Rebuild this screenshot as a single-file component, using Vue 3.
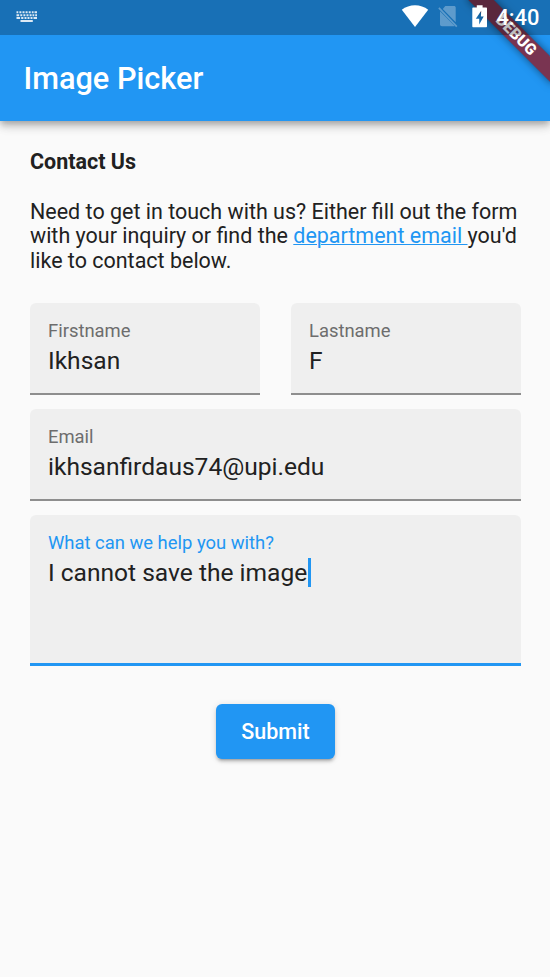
<script setup>
import { ref } from 'vue'

const names = ref([
  { label: 'Firstname', value: 'Ikhsan' },
  { label: 'Lastname', value: 'F' },
])
const email = ref('ikhsanfirdaus74@upi.edu')
const message = ref('I cannot save the image')
</script>

<template>
  <div class="screen">
    <header class="app-bar">
      <h1 class="title">Image Picker</h1>
    </header>

    <main class="content">
      <h2 class="heading">Contact Us</h2>
      <p class="intro">
        <span class="line">Need to get in touch with us? Either fill out the form</span>
        <span class="line">with your inquiry or find the <a class="link">department email </a>you'd</span>
        <span class="line">like to contact below.</span>
      </p>

      <form class="form" @submit.prevent>
        <div class="names">
          <div v-for="f in names" :key="f.label" class="field">
            <span class="label">{{ f.label }}</span>
            <span class="value">{{ f.value }}</span>
          </div>
        </div>
        <div class="field">
          <span class="label">Email</span>
          <span class="value">{{ email }}</span>
        </div>
        <div class="field area focused">
          <span class="label">What can we help you with?</span>
          <span class="value">{{ message }}<i class="caret"></i></span>
        </div>
        <button class="submit">Submit</button>
      </form>
    </main>

    <div class="banner-clip">
      <div class="banner">DEBUG</div>
    </div>

    <div class="status-bar">
      <svg class="keyboard" width="22" height="12" viewBox="0 0 22 12" fill="#fff">
        <path d="M.5.3h1.800v2H.5zM3.400.3h2v2h-2zM6.500.3h2v2h-2zM9.600.3h2v2h-2zM12.700.3h2v2h-2zM15.800.3h1.800v2h-1.800zM18.500.3h2.500v2h-2.500zM.5 3.200h2.700v2H.5zM4.300 3.200h2v2h-2zM7.400 3.200h2v2h-2zM10.500 3.200h2v2h-2zM13.600 3.200h2v2h-2zM16.500 3.200h1.800v2h-1.800zM19.200 3.200h1.800v2h-1.800zM.5 6.100h3.600v2H.5zM5.200 6.100h2.200v2H5.200zM8.500 6.100h2v2h-2zM11.500 6.100h2v2h-2zM14.500 6.100h2v2h-2zM17.500 6.100h3.500v2h-3.500zM4.500 9h12.300v2H4.500z" />
      </svg>
      <div class="indicators">
        <svg class="wifi" width="28" height="24" viewBox="0 0 28 24" fill="#fff">
          <path d="M.8 5.800C4.500 2.800 9.200 1.300 14 1.300s9.500 1.500 13.200 4.500L14 23z" />
        </svg>
        <svg class="sim" width="20" height="23" viewBox="0 0 20 23" fill="#fff" opacity=".3">
          <path d="M7.300 1h8.700c1 0 1.700.7 1.700 1.700v14.500L4.800 4z" />
          <path d="M2 6.200 16.700 21c-.3.200-.6.300-1 .3H4c-1.200 0-2-.8-2-2z" />
          <path d="M.9 2.900 18.800 21.600" stroke="#fff" stroke-width="1.700" />
        </svg>
        <svg class="battery" width="16" height="23" viewBox="0 0 16 23" fill="#fff">
          <path fill-rule="evenodd" d="M4.800.2h5.800v2.300H14c.6 0 1 .4 1 1v17.800c0 .6-.4 1-1 1H1.300c-.6 0-1-.4-1-1V3.500c0-.6.4-1 1-1h3.500zM9.200 5.700 3.800 13.800h3.400v5.800L11.700 11.600H8.900z" />
        </svg>
        <span class="time">4:40</span>
      </div>
    </div>
  </div>
</template>

<style>
body {
  margin: 0;
  background: #fafafa;
}
</style>

<style scoped>
.screen {
  position: relative;
  width: 550px;
  height: 977px;
  overflow: hidden;
  background: #fafafa;
  color: #212121;
  font-family: Roboto, "Liberation Sans", sans-serif;
}
.app-bar {
  position: relative;
  box-sizing: border-box;
  height: 121px;
  padding: 37px 23.500px 0;
  display: flex;
  align-items: center;
  background: #2196f3;
  box-shadow: 0 3px 6px -1px rgba(0, 0, 0, .2), 0 6px 8px rgba(0, 0, 0, .14), 0 1px 15px rgba(0, 0, 0, .12);
}
.title {
  margin: 0;
  color: #fff;
  font-size: 30.700px;
  line-height: 36px;
  font-weight: 500;
  white-space: nowrap;
}
.content {
  padding: 28px 29px 0 30px;
}
.heading {
  margin: 0;
  font-size: 21.500px;
  line-height: 25px;
  font-weight: 700;
}
.intro {
  margin: 25.500px 0 0;
  font-size: 21.490px;
  line-height: 24.500px;
}
.line {
  display: block;
  width: max-content;
  white-space: pre;
}
.link {
  color: #2196f3;
  text-decoration: underline;
  text-decoration-thickness: 1px;
}
.form {
  display: flex;
  flex-direction: column;
  gap: 14px;
  margin-top: 30px;
}
.names {
  display: grid;
  grid-template-columns: 1fr 1fr;
  gap: 31px;
}
.field {
  box-sizing: border-box;
  height: 92px;
  padding: 17px 18px 0;
  display: flex;
  flex-direction: column;
  background: #efefef;
  border-bottom: 2px solid #8e8e8e;
  border-radius: 6px 6px 0 0;
}
.area {
  height: 151px;
}
.focused {
  border-bottom: 3px solid #2196f3;
}
.label {
  font-size: 18.420px;
  line-height: 22px;
  color: #6d6d6d;
  width: max-content;
}
.focused .label {
  color: #2196f3;
}
.value {
  margin-top: 4px;
  font-size: 24.560px;
  line-height: 30px;
  width: max-content;
  white-space: pre;
}
.caret {
  display: inline-block;
  width: 3px;
  height: 29px;
  margin-left: .5px;
  vertical-align: top;
  background: #2196f3;
}
.submit {
  align-self: center;
  margin-top: 24px;
  width: 119px;
  height: 55px;
  padding: 0;
  border: 0;
  border-radius: 6px;
  background: #2196f3;
  color: #fff;
  font: 500 21.500px/25px Roboto, sans-serif;
  box-shadow: 0 4px 2px -3px rgba(0, 0, 0, .2), 0 3px 3px rgba(0, 0, 0, .14), 0 1px 7px rgba(0, 0, 0, .12);
}
.banner-clip {
  position: absolute;
  top: 0;
  right: 0;
  width: 120px;
  height: 121px;
  overflow: hidden;
}
.banner {
  position: absolute;
  top: 26px;
  left: 24.500px;
  width: 122px;
  height: 18.300px;
  transform: rotate(45deg);
  background: rgba(160, 10, 12, .7);
  box-shadow: 0 0 9px rgba(0, 0, 0, .5);
  color: #fff;
  text-align: center;
  font-size: 15.600px;
  line-height: 18.600px;
  font-weight: 900;
}
.status-bar {
  position: absolute;
  top: 0;
  left: 0;
  box-sizing: border-box;
  width: 550px;
  height: 35px;
  padding: 0 10.500px 0 16px;
  display: flex;
  align-items: flex-start;
  justify-content: space-between;
  background: rgba(0, 0, 0, .25);
  color: #fff;
}
.keyboard {
  margin-top: 11px;
  opacity: .85;
}
.indicators {
  display: flex;
  align-items: flex-start;
}
.wifi {
  margin-top: 4px;
}
.sim {
  margin: 5px 0 0 8.500px;
}
.battery {
  margin: 5px 0 0 14px;
}
.time {
  margin: 5px 0 0 8.500px;
  font-size: 21.900px;
  line-height: 25px;
  font-weight: 500;
}
</style>
